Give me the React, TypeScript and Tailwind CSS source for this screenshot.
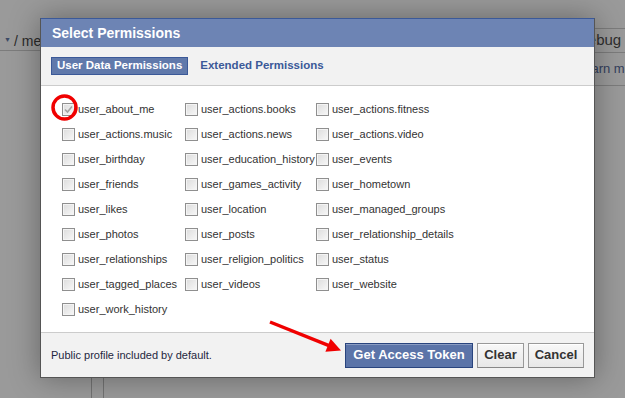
import React from 'react';

const columns: string[][] = [
  [
    'user_about_me',
    'user_actions.music',
    'user_birthday',
    'user_friends',
    'user_likes',
    'user_photos',
    'user_relationships',
    'user_tagged_places',
    'user_work_history',
  ],
  [
    'user_actions.books',
    'user_actions.news',
    'user_education_history',
    'user_games_activity',
    'user_location',
    'user_posts',
    'user_religion_politics',
    'user_videos',
  ],
  [
    'user_actions.fitness',
    'user_actions.video',
    'user_events',
    'user_hometown',
    'user_managed_groups',
    'user_relationship_details',
    'user_status',
    'user_website',
  ],
];

const CheckBox: React.FC<{ checked?: boolean }> = ({ checked }) => (
  <span className="relative flex h-[13px] w-[13px] shrink-0 items-center justify-center border border-[#8f8f8f] bg-gradient-to-br from-[#dcdcdc] to-[#f8f8f8] shadow-[inset_0_0_0_1px_#f4f4f4]">
    {checked && (
      <svg width="9" height="9" viewBox="0 0 9 9">
        <path d="M1 4.5 L3.5 7 L8 1.5" fill="none" stroke="#a3a3a3" strokeWidth="1.6" />
      </svg>
    )}
  </span>
);

const PermissionRow: React.FC<{ name: string; checked?: boolean }> = ({ name, checked }) => (
  <label className="flex h-[25px] items-center gap-[3px] whitespace-nowrap pt-px text-[11px] text-[#333]">
    <CheckBox checked={checked} />
    <span>{name}</span>
  </label>
);

export default function App() {
  return (
    <div className="relative h-[398px] w-[625px] overflow-hidden bg-[#9a9a9a] font-['Liberation_Sans',Arial,sans-serif]">
      {/* page under the overlay */}
      <div className="flex h-full">
        <div className="flex flex-1 flex-col">
          <div className="mt-[31px] flex h-[20px] items-start border-b border-[#7c7c7c] pl-[4px] text-[14px] text-[#2a2a2a]">
            <span className="mr-[3px] mt-[4px] text-[7px] text-[#3d4a66]">▼</span>
            <span>/ me?</span>
          </div>
          <div className="mt-auto ml-[91px] h-[20px] w-[13px] border-x border-[#737373]" />
        </div>
        <div className="flex w-[48px] flex-col overflow-hidden">
          <div className="mt-[28px] flex h-[25px] items-center whitespace-nowrap border-y border-[#7c7c7c] text-[15px] text-[#2e2e2e]">
            Debug E
          </div>
          <div className="flex h-[33px] items-center whitespace-nowrap border-b border-[#7c7c7c] text-[13px] text-[#34405c]">
            Learn mor
          </div>
        </div>
      </div>

      {/* dialog */}
      <div className="absolute left-[40px] top-[18px] flex w-[555px] flex-col border border-[#555] border-t-[#3b5998] bg-white shadow-[0_0_28px_rgba(0,0,0,0.35)]">
        <div className="flex h-[28px] items-center bg-[#6d84b4] pl-[11px] text-[14px] font-bold text-white">
          Select Permissions
        </div>
        <div className="flex h-[39px] items-start gap-[12px] border-b border-[#cccccc] bg-[#f2f2f2] px-[10px] pt-[10px] text-[11.5px] font-bold">
          <div className="flex h-[18px] items-center border border-[#3b5998] bg-[#6079ab] px-[5px] text-white">
            User Data Permissions
          </div>
          <div className="flex h-[18px] items-center text-[#3b5998]">Extended Permissions</div>
        </div>
        <div className="grid h-[246px] grid-cols-[123px_131px_1fr] content-start pl-[21px] pt-[10px]">
          {columns.map((col, i) => (
            <div key={i} className="flex flex-col">
              {col.map((name, j) => (
                <PermissionRow key={name} name={name} checked={i === 0 && j === 0} />
              ))}
            </div>
          ))}
        </div>
        <div className="flex h-[45px] items-center justify-between border-t border-[#cccccc] bg-[#f2f2f2] pl-[10px] pr-[10px]">
          <span className="text-[11px] text-[#1f2640]">Public profile included by default.</span>
          <div className="flex items-center gap-[4px] text-[13px] font-bold">
            <button className="h-[25px] w-[128px] border border-[#29447e] bg-[#5b74a8] text-white shadow-[inset_0_1px_0_#8a9cc2]">
              Get Access Token
            </button>
            <button className="h-[25px] w-[47px] border border-[#999] border-b-[#888] bg-gradient-to-b from-[#f8f8f8] to-[#e8e8e8] text-[#333] shadow-[inset_0_1px_0_#fff]">
              Clear
            </button>
            <button className="h-[25px] w-[56px] border border-[#999] border-b-[#888] bg-gradient-to-b from-[#f8f8f8] to-[#e8e8e8] text-[#333] shadow-[inset_0_1px_0_#fff]">
              Cancel
            </button>
          </div>
        </div>
      </div>

      {/* annotations */}
      <svg className="pointer-events-none absolute left-0 top-0" width="625" height="398">
        <circle cx="64.5" cy="107.5" r="11.5" fill="none" stroke="#f00000" strokeWidth="3.5" />
        <line x1="270" y1="322" x2="329" y2="345.7" stroke="#f00000" strokeWidth="3.5" />
        <polygon points="341,350.5 330.6,338.8 325.4,351.8" fill="#f00000" />
      </svg>
    </div>
  );
}
